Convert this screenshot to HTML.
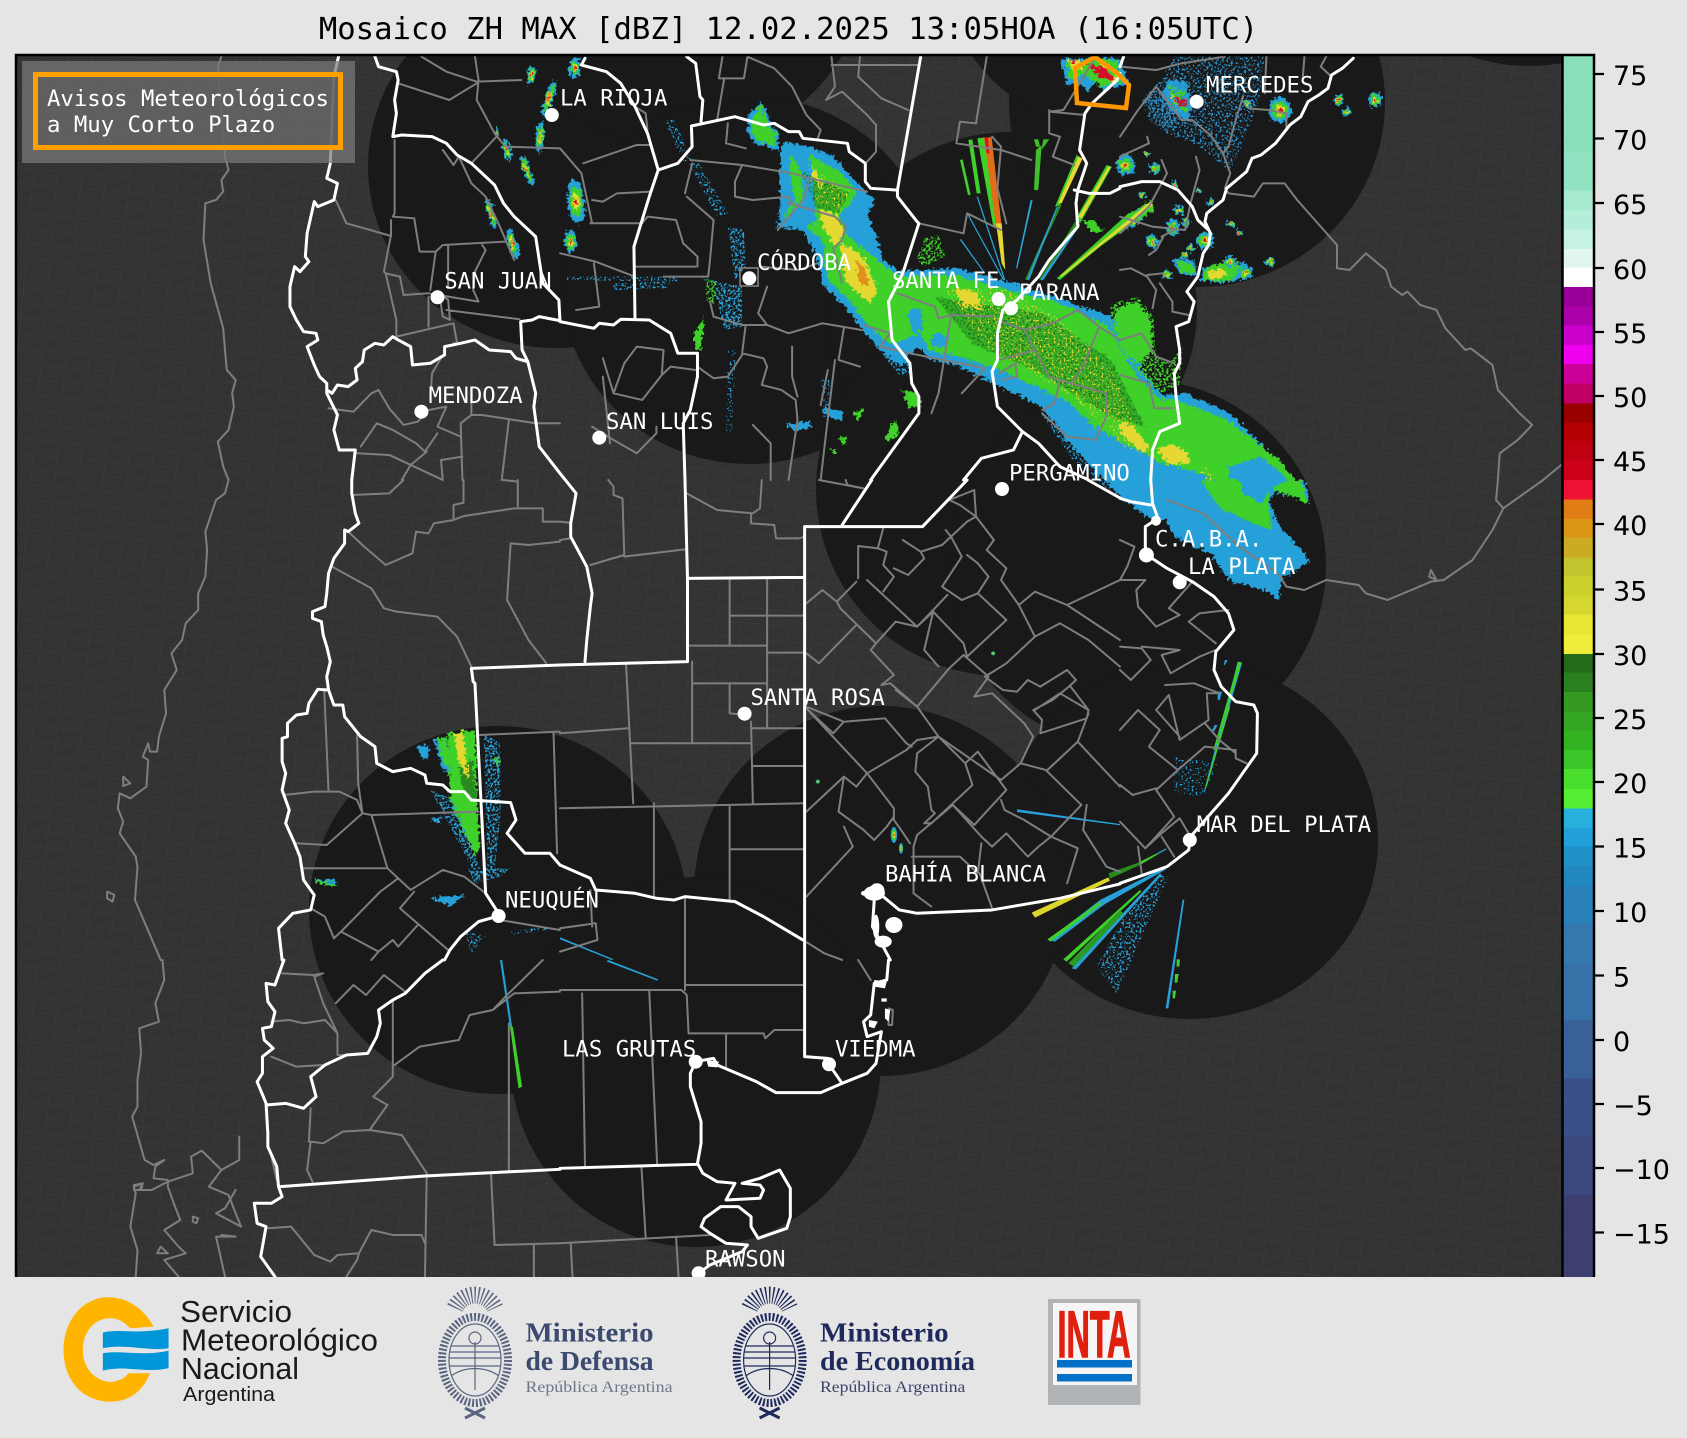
<!DOCTYPE html>
<html lang="es"><head><meta charset="utf-8"><title>Mosaico ZH MAX</title>
<style>
html,body{margin:0;padding:0;background:#e5e5e5}
svg{display:block}
.w,.g{fill:none;stroke-linejoin:round;stroke-linecap:round;vector-effect:non-scaling-stroke}
.w{stroke:#fff;stroke-width:3}
.g{stroke:#7e7e7e;stroke-width:2}
.l{font-family:"DejaVu Sans Mono","Liberation Mono",monospace;font-size:22.3px;fill:#fff}
.t{font-family:"DejaVu Sans",sans-serif;font-size:27px;fill:#000}
.b{fill:#28a0d8}.n{fill:#3fd02a}.d{fill:#2a8a20}.y{fill:#e6d832}.o{fill:#e0901a}.r{fill:#d8102a}.m{fill:#e000b0}
</style></head><body>
<svg xmlns="http://www.w3.org/2000/svg" width="1687" height="1438" viewBox="0 0 1687 1438">
<defs>
<clipPath id="pc"><rect x="16" y="55" width="1547" height="1222"/></clipPath>
<pattern id="p" width="24" height="15" patternUnits="userSpaceOnUse" patternTransform="rotate(5)"><path d="M0 .5H24M.5 0V15" stroke="#444" stroke-width="1" stroke-dasharray="1 2" fill="none"/></pattern>
<filter id="rough" filterUnits="userSpaceOnUse" x="0" y="0" width="1687" height="1438"><feTurbulence type="fractalNoise" baseFrequency=".28" numOctaves="2" seed="4"/><feDisplacementMap in="SourceGraphic" scale="9" xChannelSelector="R" yChannelSelector="G"/></filter>
<filter id="speck" filterUnits="userSpaceOnUse" x="0" y="0" width="1687" height="1438"><feTurbulence type="fractalNoise" baseFrequency=".42" numOctaves="2" seed="9"/><feColorMatrix values="0 0 0 0 0 0 0 0 0 0 0 0 0 0 0 9 0 0 0 -4.4"/><feComposite in="SourceGraphic" operator="in"/></filter>
<filter id="mid" filterUnits="userSpaceOnUse" x="0" y="0" width="1687" height="1438"><feTurbulence type="fractalNoise" baseFrequency=".45" numOctaves="2" seed="21"/><feColorMatrix values="0 0 0 0 0 0 0 0 0 0 0 0 0 0 0 14 0 0 0 -7.7"/><feComposite in="SourceGraphic" operator="in"/></filter>
<filter id="sparse" filterUnits="userSpaceOnUse" x="0" y="0" width="1687" height="1438"><feTurbulence type="fractalNoise" baseFrequency=".5" numOctaves="2" seed="33"/><feColorMatrix values="0 0 0 0 0 0 0 0 0 0 0 0 0 0 0 14 0 0 0 -8.4"/><feComposite in="SourceGraphic" operator="in"/></filter>
<g id="c"><ellipse class="b" rx="20" ry="20"/><ellipse class="n" rx="14" ry="14"/><ellipse class="y" rx="8" ry="8"/><ellipse class="r" rx="3.500" ry="3.500"/></g>
<g id="arms" fill="none" stroke="currentColor"><ellipse rx="33" ry="43" stroke-width="8" stroke-dasharray="2 1.800"/><ellipse rx="26" ry="36" stroke-width="1.200"/><path stroke-width="1.200" d="M-24 -14H24M-25 -8H25M-26 -2H26M-25 6H25M0 -18V30M-24 16C-10 6 10 6 24 16"/><circle cy="-22" r="6" stroke-width="1.200"/><path stroke-width="17" stroke-dasharray="1.300 2.200" d="M-20 -52A22 22 0 0 1 20 -52"/><path stroke-width="3" d="M-10 58 10 48M10 58-10 48"/></g>
</defs>

<rect width="1687" height="1438" fill="#e5e5e5"/>
<g clip-path="url(#pc)">
<rect x="16" y="55" width="1547" height="1222" fill="#333"/>
<rect x="16" y="55" width="1547" height="1222" fill="url(#p)"/>
<g fill="#191919">
<ellipse cx="556" cy="166" rx="188" ry="182"/>
<ellipse cx="680" cy="-40" rx="188" ry="188"/>
<ellipse cx="749" cy="280" rx="188" ry="184"/>
<ellipse cx="1011" cy="310" rx="186" ry="178"/>
<ellipse cx="1197" cy="102" rx="188" ry="185"/>
<ellipse cx="1120" cy="-50" rx="182" ry="182"/>
<ellipse cx="1529" cy="-118" rx="184" ry="184"/>
<ellipse cx="1002" cy="489" rx="186" ry="187"/>
<ellipse cx="1137" cy="565" rx="189" ry="186"/>
<ellipse cx="1190" cy="840" rx="188" ry="179"/>
<ellipse cx="881" cy="891" rx="187" ry="185"/>
<ellipse cx="498" cy="910" rx="189" ry="184"/>
<ellipse cx="695.700" cy="1062" rx="185" ry="185"/>
</g>

<!-- precipitación: capas -->
<g filter="url(#rough)">
 <g transform="translate(780 100) scale(.3444 .3333)">
  <path class="b" d="M10 125 70 135 150 165 215 240 275 300 255 345 275 400 300 480 345 515 510 505 660 545 800 590 960 650 1000 690 1060 825 1110 885 1175 880 1300 935 1420 1055 1530 1190 1450 1150 1420 1200 1440 1260 1080 1260 1000 1200 930 1130 840 1030 760 920 640 860 600 840 520 800 430 775 400 740 350 800 290 750 240 690 190 620 130 560 105 470 60 370 0 365 0 150Z"/>
  <path class="n" d="M30 165 100 170 180 220 225 280 175 345 195 405 265 465 320 510 350 530 500 525 680 575 800 605 950 675 1040 835 1100 895 1150 900 1300 960 1450 1080 1535 1195 1450 1150 1400 1070 1300 1100 1330 1190 1280 1150 1200 1110 1100 1090 1060 1060 1000 1030 920 985 830 900 720 850 640 810 520 770 430 750 410 700 370 715 320 735 260 680 200 600 140 540 125 470 130 430 60 365 10 350 45 300 30 240Z"/>
  <path class="n" d="M975 625 1040 605 1075 660 1080 750 1050 790 1000 760 975 700Z"/>
  <path class="b" d="M372 628 410 628 415 690 382 700ZM440 700 490 705 478 745 440 738ZM1310 1105 1400 1075 1490 1150 1425 1170 1420 1260 1100 1260 1090 1180 1200 1170 1300 1170Z"/>
  <path class="d" opacity=".5" d="M450 590 760 640 960 780 1060 980 960 950 760 820 560 730ZM70 215 200 280 170 340 90 320Z"/>
  <path class="y" d="M175 425 240 470 285 570 262 610 190 545ZM110 325 165 345 190 400 160 440 125 380ZM65 180 105 215 130 270 95 235Z"/>
  <path class="o" d="M220 480 245 500 262 565 230 545Z"/>
  <path class="y" d="M1095 1050 1135 1030 1185 1060 1190 1090 1130 1095ZM985 960 1030 985 1075 1045 1050 1055 990 1000ZM505 565 570 575 590 630 530 620Z"/>
  <path class="b" d="M125 925 185 935 180 960 130 950ZM25 970 90 965 80 990 35 985ZM1075 415 1095 420 1085 445Z"/>
  <path class="n" d="M355 870 395 880 410 920 375 925ZM300 1020 335 960 345 1000 320 1025ZM210 935 245 930 225 965ZM145 1050 165 1045 160 1065ZM165 1015 195 1015 185 1035Z"/>
 </g>
 <g transform="translate(560 0) scale(.3571 .3333)">
  <path class="b" d="M600 685 680 610 680 520 630 430 700 470 720 660 680 690 620 680Z"/>
  <path class="n" d="M375 1000 405 950 395 1050 378 1050Z"/>
  <path class="b" d="M530 340 565 305 595 380 615 400 610 450 545 430 525 395Z"/>
  <path class="n" d="M540 345 565 315 585 380 605 400 600 440 550 420 535 390Z"/>
  <path class="b" d="M740 1220 790 1235 780 1255 745 1240ZM640 1275 700 1265 695 1290 645 1290Z"/>
 </g>
 <g transform="translate(960 50) scale(.3333)">
  <path class="b" d="M305 25 480 25 505 100 430 125 410 90 385 125 360 100 320 105Z"/>
  <path class="n" d="M315 30 470 30 485 95 425 110 370 70 330 90Z"/>
  <path class="y" d="M320 30 360 30 370 60 335 55ZM440 90 470 80 470 100ZM420 35 445 50 430 70Z"/>
  <path class="r" d="M378 40 440 55 462 90 420 85ZM330 30 350 30 345 45Z"/>
  <path class="b" d="M625 90 680 95 695 160 685 210 630 185 605 130Z"/>
  <path class="n" d="M622 105 672 125 685 190 640 165Z"/>
  <path class="y" d="M625 125 660 150 655 175Z"/>
  <path class="r" d="M640 140 680 150 675 170 650 165Z"/>
  <path class="b" d="M635 625 705 630 710 680 660 672Z"/><path class="n" d="M645 630 700 645 705 670 660 665ZM500 500 570 450 585 480 520 520ZM365 510 400 510 430 545 400 550Z"/>
  <path class="b" d="M730 650 860 640 880 680 780 700 720 690Z"/>
  <path class="n" d="M735 655 810 630 860 655 800 695 730 690Z"/>
  <path class="y" d="M745 665 790 655 800 680 750 690ZM800 630 830 630 825 645Z"/>
 </g>
 <g transform="translate(1120 0) scale(.3616 .3333)">
  <use href="#c" transform="translate(443 330) scale(1.6 1.9)"/>
  <use href="#c" transform="translate(605 300) scale(.8)"/><use href="#c" transform="translate(625 335) scale(.7)"/>
  <use href="#c" transform="translate(705 300) scale(.9 1.1)"/><use href="#c" transform="translate(352 312) scale(.6)"/>
  <use href="#c" transform="translate(15 495) scale(1.3 1.5)"/><use href="#c" transform="translate(95 505) scale(.8)"/>
  <use href="#c" transform="translate(73 462) scale(.5 .4)"/><use href="#c" transform="translate(150 555) scale(.5)"/>
  <use href="#c" transform="translate(250 607) scale(.55)"/><use href="#c" transform="translate(218 575) scale(.4)"/>
  <use href="#c" transform="translate(305 672) scale(.5)"/><use href="#c" transform="translate(330 700) scale(.5)"/>
  <use href="#c" transform="translate(162 630) scale(.7)"/><use href="#c" transform="translate(146 682) scale(.9 1.3)"/>
  <use href="#c" transform="translate(183 668) scale(.6)"/><use href="#c" transform="translate(88 725) scale(.8 1)"/>
  <use href="#c" transform="translate(195 745) scale(.55)"/><use href="#c" transform="translate(235 722) scale(1.2)"/>
  <use href="#c" transform="translate(178 765) scale(.55)"/><use href="#c" transform="translate(130 825) scale(.7)"/>
  <use href="#c" transform="translate(305 785) scale(.8)"/><use href="#c" transform="translate(345 818) scale(1)"/>
  <use href="#c" transform="translate(415 785) scale(.7)"/><use href="#c" transform="translate(62 585) scale(.5)"/>
  <use href="#c" transform="translate(45 655) rotate(40) scale(.7 1.9)"/>
 </g>
 <g transform="translate(0 0) scale(.3571 .3333)">
  <use href="#c" transform="translate(1487 225) rotate(15) scale(.6 1.4)"/>
  <use href="#c" transform="translate(1537 295) rotate(18) scale(.6 2.8)"/>
  <use href="#c" transform="translate(1513 410) rotate(5) scale(.6 2.4)"/>
  <use href="#c" transform="translate(1420 450) rotate(-12) scale(.5 1.7)"/>
  <use href="#c" transform="translate(1475 510) rotate(-18) scale(.55 2.4)"/>
  <use href="#c" transform="translate(1375 640) rotate(-15) scale(.5 2.4)"/>
  <use href="#c" transform="translate(1435 730) rotate(-15) scale(.65 2.4)"/>
  <use href="#c" transform="translate(1392 395) scale(.25 .7)"/>
 </g>
 <g transform="translate(560 0) scale(.3571 .3333)">
  <use href="#c" transform="translate(42 205) scale(.8 1.5)"/>
  <use href="#c" transform="translate(45 605) rotate(-6) scale(1.2 3.3)"/>
  <use href="#c" transform="translate(30 725) scale(.9 1.6)"/>
 </g>
 <g transform="translate(1120 480) scale(.3616 .3333)">
  <path class="b" d="M0 0 510 0 525 70 420 30 410 90 450 150 510 220 525 245 445 300 440 362 400 330 300 300 250 220 150 170 100 70 0 40Z"/>
  <path class="n" d="M225 0 500 0 522 70 415 25 410 80 420 150 370 130 270 80Z"/>
  <path class="b" d="M330 0 470 0 420 25 390 70 340 40Z"/>
 </g>
 <g transform="translate(0 480) scale(.3571 .3333)">
  <path class="b" d="M1170 800 1200 795 1200 835 1180 835ZM1205 1020 1240 1010 1225 1030ZM885 1195 945 1205 940 1220 890 1210ZM1205 1255 1300 1245 1265 1280Z"/>
  <path class="b" d="M1215 780 1250 770 1270 880 1240 870Z"/>
  <path class="n" d="M1222 775 1250 770 1262 860 1243 850Z"/>
  <path class="n" d="M1255 760 1332 750 1335 960 1345 1100 1330 1130 1260 960Z"/>
  <path class="d" d="M1285 860 1325 840 1332 960 1300 940Z"/>
  <path class="y" d="M1270 760 1296 757 1312 900 1290 860Z"/>
  <path class="n" d="M888 1200 948 1215 940 1222 885 1208ZM1380 840 1400 820 1395 860Z"/>
 </g>
</g>

<!-- moteado denso -->
<g filter="url(#speck)">
 <g transform="translate(780 100) scale(.3444 .3333)">
  <path class="n" d="M395 480 420 415 460 405 480 470 420 500Z"/>
  <path class="n" d="M960 610 1040 590 1085 650 1090 760 1130 790 1170 740 1160 860 1100 880 1040 820 1000 770 960 700Z"/>
 </g>
 <g transform="translate(560 0) scale(.3571 .3333)">
  <path class="b" d="M470 680 515 690 520 800 490 840ZM400 835 510 860 510 980 460 990 440 900Z"/>
  <path class="n" d="M405 835 440 850 430 920 410 900Z"/>
  <path class="b" d="M900 1060 960 1060 990 1120 950 1125Z"/>
 </g>
 <g transform="translate(0 480) scale(.3571 .3333)">
  <path class="b" d="M1205 930 1270 960 1345 1170 1360 1190 1330 1180ZM1355 760 1400 790 1402 1000 1385 1170 1365 1170 1360 950Z"/>
  <path class="b" d="M1310 1165 1430 1165 1400 1190 1330 1210Z"/>
 </g>
 <g transform="translate(1120 0) scale(.3616 .3333)"><path fill="#2a8cc4" d="M62 300 120 270 160 370 125 395Z"/></g>
</g>
<!-- moteado medio -->
<g filter="url(#mid)">
 <g transform="translate(1120 0) scale(.3616 .3333)">
  <path fill="#2a8cc4" d="M60 300 110 240 150 170 400 170 385 300 345 420 305 510 220 440 170 370 130 400 80 360Z"/>
  <path fill="#2a8cc4" d="M60 300 170 240 300 380 300 510 220 440 130 400Z"/>
 </g>
 <g transform="translate(560 0) scale(.3571 .3333)">
  <path class="b" d="M360 490 390 490 470 640 440 650ZM20 830 330 830 330 845 20 840ZM150 850 310 845 300 865 150 870ZM615 610 680 600 720 660 650 690 600 685Z"/>
  <path class="b" d="M290 360 320 360 370 480 345 485Z"/>
 </g>
 <g transform="translate(780 100) scale(.3444 .3333)">
  <path class="b" d="M760 945 830 915 960 1120 1000 1200 940 1160 850 1080Z"/>
  <path fill="#1f7a1a" d="M450 590 760 640 960 780 1060 980 960 950 760 820 560 730ZM60 210 200 280 170 340 100 320Z"/>
 </g>
 <g transform="translate(1000 830) scale(.3333)">
  <path class="b" d="M290 410 350 490 430 310 505 140 480 130 380 240Z"/>
 </g>
 <g transform="translate(0 480) scale(.3571 .3333)"><path class="b" d="M1300 1350 1360 1370 1320 1420ZM1430 1355 1530 1340 1530 1350 1430 1365Z"/></g>
</g>
<!-- moteado escaso -->
<g filter="url(#sparse)">
 <g transform="translate(780 100) scale(.3444 .3333)">
  <path class="y" d="M480 570 640 560 800 650 960 800 1040 1000 1100 1080 1000 1040 860 900 700 800 600 740ZM120 220 200 270 180 340 100 300Z"/>
  <path class="y" d="M640 620 780 680 860 800 800 840 680 770Z"/>
  <path class="y" d="M1230 1095 1260 1130 1250 1155 1220 1120Z"/>
 </g>
 <g transform="translate(560 0) scale(.3571 .3333)">
  <path class="b" d="M470 1050 492 1050 482 1300 465 1300ZM730 1130 762 1140 752 1230 730 1220Z"/>
 </g>
 <g transform="translate(1120 480) scale(.3616 .3333)">
  <path class="b" d="M150 830 270 850 230 950 150 940Z"/>
 </g>
</g>

<!-- ecos radiales -->
<g fill="none" stroke-linecap="butt">
 <g transform="translate(960 50) scale(.3333)">
  <path fill="#2aa8dc" d="M20 490 24 490 133 690 129 690ZM0 570 3 567 73 665 69 665ZM212 450 218 450 172 655 168 655ZM50 440 54 440 136 690 132 690Z"/>
  <path fill="#3fd02a" d="M25 270 37 268 62 430 50 430ZM0 330 8 328 32 435 24 435ZM52 265 75 262 120 530 100 530Z"/>
  <path fill="#e06d18" d="M72 262 95 262 125 530 108 530Z"/>
  <path fill="#e01028" d="M73 262 84 262 88 310 80 310Z"/>
  <path fill="#e6d832" d="M108 520 125 520 136 660 125 640Z"/>
  <path fill="#3fc02a" d="M228 300 245 285 235 420 222 420ZM222 268 235 268 240 290 228 290ZM250 268 268 268 245 300Z"/>
  <path fill="#3fd02a" d="M350 315 365 325 300 465 285 470ZM440 345 456 350 360 520 345 510Z"/>
  <path fill="#e6d832" d="M355 320 368 325 305 460 295 460ZM445 350 452 352 365 505 355 500Z"/>
  <path fill="#2a8a20" d="M295 465 305 465 200 690 195 688ZM345 515 360 515 245 690 238 688Z"/>
  <path fill="#3fd02a" d="M505 490 585 470 420 590 300 690 290 685Z"/>
  <path fill="#e6d832" d="M510 505 570 455 580 465 430 580 305 680 300 678Z"/>
  <path fill="#28a0d8" d="M200 690 290 470 293 472 208 690ZM240 690 360 520 360 526 250 690Z"/>
 </g>
 <g transform="translate(1000 830) scale(.3333)">
  <path fill="#dcd62a" d="M325 142 95 248 105 263 330 152Z"/>
  <path fill="#2a8a20" d="M325 130 415 98 420 105 330 146Z"/>
  <path fill="#3fd02a" d="M415 98 470 70 472 74 420 105Z"/>
  <path fill="#28a0d8" d="M470 70 498 55 500 58 472 74ZM300 210 495 112 498 118 310 225ZM215 415 480 130 485 135 228 418ZM548 208 553 210 505 535 497 535Z"/>
  <path fill="#28a0d8" d="M145 330 300 210 315 222 165 335Z"/>
  <path fill="#3fd02a" d="M142 328 300 215 305 222 152 335ZM190 388 420 180 424 185 200 395Z"/>
  <path fill="#2a9a24" d="M205 400 360 240 370 250 222 410Z"/>
  <path fill="#3fd02a" d="M530 388 540 388 538 410 530 410ZM525 432 536 432 532 458 524 458ZM518 482 528 482 525 505 518 505Z"/>
 </g>
 <g transform="translate(1120 480) scale(.3616 .3333)">
  <path fill="#28a0d8" d="M325 545 338 548 250 880 235 935 232 935 262 810 300 660 ZM290 540 298 540 290 555 287 555ZM270 635 282 635 276 660 270 660ZM262 735 270 735 260 755 255 750Z"/>
  <path fill="#3fd02a" d="M327 545 336 548 262 810 258 810ZM300 680 305 680 240 920 236 920Z"/>
 </g>
 <g transform="translate(560 480) scale(.3571 .3333)">
  <path fill="#28a0d8" d="M1280 988 1568 1032 1568 1036 1280 996Z"/>
  <path fill="#28a0d8" d="M0 1372 150 1438 145 1440 0 1378Z"/>
  <use href="#c" transform="translate(722 905) scale(.3)"/>
  <use href="#c" transform="translate(1213 520) scale(.3)"/>
  <use href="#c" transform="translate(935 1065) scale(.45 1.2)"/>
  <use href="#c" transform="translate(955 1105) scale(.3 .8)"/>
 </g>
 <g transform="translate(560 960) scale(.3571 .3333)"><path fill="#28a0d8" d="M135 0 275 58 272 62 130 4Z"/></g>
 <g transform="translate(0 960) scale(.3571 .3333)">
  <path fill="#28a0d8" d="M1400 0 1406 0 1434 200 1428 200Z"/>
  <path fill="#3fd02a" d="M1428 200 1436 200 1462 380 1452 385Z"/>
 </g>
</g>

<!-- limites grises -->
<g transform="translate(0 0) scale(.3571 .3333)"><path class="g" d="M620 170 610 200 630 470 640 510 620 540 625 575 605 600 575 610 570 720 590 850 625 985 630 1050 635 1110 660 1140 650 1180 655 1220 640 1290 610 1325 625 1400 640 1440M1180 170 1250 215 1335 245 1460 240M1115 250 1258 300 1335 250M1330 170 1340 240 1335 300 1385 400 1415 440 1568 445M1395 405 1320 490M1240 450 1270 495 1285 470 1320 550 1360 590 1400 680 1440 780M1105 420 1105 640 1100 650 1160 655 1175 755 1220 755 1240 735 1415 725M1095 660 1095 705 1075 815 1080 820 1120 830 1130 885 1200 880 1340 905 1325 870 1330 815 1360 750 1350 735M1255 735 1255 865M1220 755 1205 870M940 600 970 670 1020 685 1095 708M1080 820 1110 960 1110 1010 1270 970 1280 1030 1270 1030M1200 890 1200 980M1230 880 1240 950 1260 960 1255 900ZM1250 930 1455 958M1240 1065 1210 1120 1205 1190M920 1225 990 1235 1040 1180 1060 1170 1090 1225 1130 1275 1170 1265 1200 1230 1250 1220 1225 1280 1290 1310M1010 1340 1055 1270 1100 1290 1165 1330 1190 1355 1225 1300M1000 1360 1090 1365 1150 1395 1240 1440M1150 1395 1195 1355M1290 1270 1320 1245 1350 1245 1500 1270 1568 1270M1290 1270 1295 1440M1425 1260 1405 1440M1235 1380 1295 1370M1235 1380 1240 1440M1320 1200 1320 1245M1150 1395 1125 1440"/></g>
<g transform="translate(560 0) scale(.3571 .3333)"><path class="g" d="M455 170 445 235 515 235 525 170M460 235 440 360M470 370 465 430 520 445M365 480 510 495 650 520 700 535 860 575M210 320 240 340 245 390M65 490 215 435 250 435M90 600 120 605 160 580 255 575M85 670 230 670 245 650 325 660 345 730 385 770 385 800M0 760 100 785 210 830M95 790 110 920 45 930M0 445 60 520 90 670M210 800 380 800M355 590 430 660 420 780 415 830 380 830 290 830M510 495 490 545 490 590 540 600 640 590 650 610M350 580 370 490M420 905 430 950 510 975 580 975 640 1000 735 970 845 990M520 975 510 1060 570 1075 580 1100 565 1155 620 1170 660 1200 665 1260 640 1440M650 1040 650 1130 665 1190M590 1440 590 1330 540 1275M385 1100 430 1135 470 1130 510 1065M120 1075 150 1180 230 1200 285 1125 290 1050 215 1040 180 1090 150 1180M120 1130 140 1330M90 1280 150 1320 215 1360 270 1300 270 1280M380 1110 310 1100 285 1125M730 1440 745 1300 770 1080M795 985 780 1080 840 1100M750 1110 730 1215M560 800 670 810 720 790M580 860 555 940 580 975M700 535 680 600 610 690M640 610 770 650 800 680 790 720 765 745 790 850M945 880 1050 920 1060 955 1095 945 1210 950M850 975 925 1000 895 1040 980 1060 1190 1105M1095 950 1060 1180 1040 1240M1125 1180 1190 1105M1005 670 1130 700 1140 640 1235 690M1120 365 1110 430 1235 450 1320 480M1210 410 1235 440 1225 565 1250 670M1225 960 1300 990 1380 970 1450 930 1510 980 1568 1020M1230 1080 1330 1050 1370 1130 1400 1140 1430 1150 1530 1180 1530 1250 1500 1320 1420 1310 1350 1240M1300 990 1330 1050M1510 980 1465 1100 1430 1150M1400 1140 1385 1210 1350 1230M1230 1120 1275 1090 1280 1130 1240 1140M1370 330 1370 400 1400 410 1380 470 1440 495M525 170 600 205 650 260 690 345 730 390 720 420M760 170 770 260 745 300 790 275 860 345 885 375 885 455 860 485M760 195 1005 195M840 170 835 230 900 295 975 330M1195 170 1165 370 1120 365M1500 170 1410 330 1370 335 1470 345"/></g>
<g transform="translate(0 480) scale(.3571 .3333)"><path class="g" d="M640 0 630 40 605 60 575 155 580 210 575 290 555 340 555 390 520 430 510 480 480 520 495 570 460 630 465 700 445 770 440 815 420 815 415 790 400 830 415 840 410 920 365 955 335 940 330 985 345 1025 335 1060 380 1130 385 1160 378 1260 410 1340 450 1440M985 45 1090 40 1130 0M975 155 1020 200 1080 255 1155 220 1165 155 1200 160 1215 130 1270 120 1300 108 1440 85 1520 85 1520 125 1568 125M1270 120 1270 75 1298 68 1298 0M1430 190 1480 195 1568 185M1430 190 1420 360 1480 480 1530 550M1450 0 1450 80M1410 0 1450 5M930 260 1040 325 1075 385 1110 395 1225 410 1280 470 1320 560M908 630 920 935M1000 765 1003 910 1015 1000 1040 1005 1340 995M795 945 880 935 950 935 1000 960 1015 1000 915 1095 830 1090M1040 1005 1085 1165 1115 1195 1150 1230 1240 1170 1300 1190 1360 1240M850 1165 1080 1165M1115 1195 1065 1235 955 1355 935 1375 910 1310 870 1285M1160 1235 1120 1285 1255 1410M955 1355 1060 1415 1100 1380 1115 1400 1170 1335M1340 765 1568 755M1550 755 1560 1120M1400 1320 1568 1350M1060 1415 1040 1440M300 1235 320 1245 315 1265 300 1255ZM345 890 365 910 345 918Z"/></g>
<g transform="translate(560 480) scale(.3571 .3333)"><path class="g" d="M905 145 890 205 835 198 835 295M890 205 915 215 905 255 935 290 905 335M860 300 1000 440M830 305 775 365 785 385 885 490M690 370 735 330 775 365M960 180 1010 215 1070 195 1095 170 1140 125 1165 110 1215 180 1195 210M1010 215 1020 235 975 285 935 265M1080 150 1095 170 1125 230 1070 320 1125 360 1170 340 1200 290 1170 250 1140 225M1165 110 1160 30 1090 60 1120 75 1165 110M1195 210 1250 265 1235 300 1285 375 1330 335 1420 375 1568 300M1170 340 1250 420 1140 530 1130 490 1045 395 1000 440 1085 345M1000 440 940 425 885 490 870 510 935 585 900 615 925 610 1000 680 1090 565 1130 525 1200 590 1160 650 1210 640 1300 730 1325 770 1290 850 1235 900 1060 770 1000 680 940 630M830 435 725 550 690 520M690 680 795 725 765 760 690 685 860 880 935 985 935 1020 955 1050 980 1090M1045 395 1020 510 1060 560M1190 590 1240 630 1280 635 1310 600 1345 620 1420 570 1445 600 1425 620 1380 660 1325 690 1350 720 1345 760 1475 715 1480 690 1430 620M1060 770 1000 820 995 875 1030 920 1040 990 1050 1000 1020 1030 1040 1030 1155 915 1135 850 1060 770M1135 850 1170 815 1250 930 1160 1035 1100 975 1000 1065 990 1100 990 1240 1040 1280M1100 975 1180 1070 1210 1100 1250 1060 1310 1130 1340 1100 1375 1070 1450 1105 1420 1210M1235 960 1245 990 1300 1020 1375 1070 1460 975 1360 870 1290 850M860 880 830 920 795 890 780 995 850 1050 880 1080 915 1040 935 1010M690 995 795 890M690 1250 820 1100 795 1040M985 800 970 790 910 715 800 725M860 880 970 810 1000 780 1060 770M1475 975 1465 1050 1530 1160 1568 1175M1450 785 1568 920M1365 870 1450 785 1480 700M1180 1090 1170 1180 1120 1130 985 1130M1175 1180 1210 1285M1330 690 1400 640 1480 690M1330 470 1400 430 1480 480 1568 560M1285 375 1330 470 1250 550 1190 590M1420 375 1568 480M475 297 475 495M580 297 580 745M357 497 580 497M475 407 685 407M580 518 685 518M370 545 370 790M370 610 580 610M475 610 475 700 500 703M535 725 540 970M540 745 685 745M540 858 685 858M198 790 535 790M185 555 205 970M0 760 190 745M0 985 685 970M263 970 263 1255M475 975 475 1260M475 1108 685 1108M350 1250 350 1440M355 40 440 90 540 100 560 85 565 0M535 100 535 130 600 135 605 175 670 175 685 170M725 0 850 25M800 0 805 15 850 25M135 0 150 20 150 45 175 55 180 225 85 255M180 230 350 208M0 125 25 128M0 180 30 175M680 1380 740 1420 790 1440M0 1345 100 1330 105 1380 0 1415M85 1230 90 1340"/></g>
<g transform="translate(0 960) scale(.3571 .3333)"><path class="g" d="M455 0 460 60 435 130 445 185 390 205 395 280 385 360 385 440 370 470 405 600 430 615 460 600 435 620 430 655 470 660 470 680 490 740 505 780 460 810 500 860 520 880 460 900 500 950M380 950 385 870 365 800 380 700 375 680 400 670 390 690 425 690 470 665 540 640 535 590 565 572 620 630 670 600 670 530M620 630 585 680 640 705 660 760 675 800 605 760 630 745 660 690M620 825 660 830 605 830 630 950M790 40 880 45 905 40 880 50 905 130 945 220 945 285 975 285M760 185 810 180 850 190 910 180 945 220M760 290 830 320 905 315M940 130 990 75 1025 105 1075 45 1135 95M1100 120 1100 315 1100 350 1045 410 1085 435 1035 510 960 515 905 550 870 545 860 630 875 665M870 445 865 545M1035 510 1125 525 1195 640 1190 950M1105 315 1175 260 1285 240 1315 165 1380 150 1440 100 1568 95M1380 150 1420 105 1520 0M1425 190 1425 630M1375 640 1385 855 1568 850M1495 855 1495 950M750 805 815 800 880 885 925 905 945 885 1005 880 1000 900 970 950M1005 880 1040 810 1100 825 1180 825 1190 850M760 590 775 660M540 770 555 775 550 790 540 785ZM450 860 470 880 440 880ZM375 675 400 670 395 690 375 690Z"/></g>
<g transform="translate(560 960) scale(.3571 .3333)"><path class="g" d="M0 90 340 90 355 105 360 220 570 220 575 235 600 210 680 210M350 75 680 75M350 0 350 90M62 100 70 620M250 95 272 612M465 225 465 320M228 620 240 835M0 850 420 825M30 850 35 950M325 830 332 950M835 0 870 60M920 145 932 150 930 195 920 195Z"/></g>
<g transform="translate(1120 0) scale(.3616 .3333)"><path class="g" d="M290 565 300 580 370 590 395 550 455 550 490 600 600 735 600 805 635 810 680 760 735 810 750 860 780 885 795 875 830 915 875 930 900 985 955 1050 970 1045 1030 1095 1045 1170 1105 1240 1140 1275 1100 1320 1050 1360 1045 1440M1226 1390 1170 1440M405 170 400 280M510 170 505 240M570 170 555 200 580 225M355 325 410 330 460 340 460 390M0 200 100 210 170 190 290 170M100 260 50 330 0 410M200 360 250 405 285 460 305 520M340 290 320 360 300 440 285 460M75 410 80 430 0 470M210 470 220 510 195 610M115 480 130 520 80 620 0 700M0 650 90 680 180 690 195 610M0 810 30 805 75 830 100 870 90 925M110 850 145 905 145 935 190 945M75 825 120 820M0 1020 60 1000 100 1070 150 1090M0 1125 80 1150 95 1225 145 1225M115 710 150 690M80 765 100 750 120 710M305 520 290 565M100 260 170 360 200 360"/></g>
<g transform="translate(1120 480) scale(.3616 .3333)"><path class="g" d="M1060 85 1030 150 975 240 895 300 860 305 740 360 680 340 660 315 570 300 510 330 460 320 440 285 330 200 230 100 130 60M1045 0 1040 60 1060 85M1060 85 1170 0M860 270 875 300 855 290ZM200 305 135 385 165 405 100 440 50 380 45 330 70 300M265 510 220 530 140 580 115 525 165 510 60 500M0 500 60 505 85 540 30 600 0 570M300 390 220 400 190 425 265 490M125 615 205 610 275 640 240 640 245 720 165 780 135 645 100 690 165 770M50 690 0 750M50 690 110 750 80 800 160 870 100 930 150 1010 70 1105 0 1025M160 870 235 800 320 810 320 835 350 850M235 730 275 780 320 820M100 925 35 945 0 915M70 1105 115 1060 165 1015 195 1070M115 1070 150 1130M50 1100 60 1180M0 180 40 200 20 260 0 300M0 300 70 300"/></g>

<!-- limites blancos -->
<path class="w" d="M1088 480 1120 498"/>
<g transform="translate(0 0) scale(.3571 .3333)"><path class="w" d="M948 170 935 230 930 350 925 490 915 535 945 550 935 600 890 620 880 605 860 700 855 770 865 785 840 815 825 800 812 860 812 920 830 960 850 995 885 1000 890 1020 860 1040 880 1095 895 1130 915 1150 915 1180 945 1245 935 1290 950 1350 995 1350 985 1440M915 1170 930 1180 945 1155 975 1160 1000 1140 995 1105 1015 1085 1020 1050 1050 1030 1075 1035 1100 1010 1115 1020 1150 1040 1155 1095 1205 1090 1245 1065 1245 1040 1290 1030 1330 1020 1370 1050 1430 1055 1445 1075 1478 1085 1500 1180 1495 1220 1510 1340 1568 1420M1050 170 1060 200 1110 215 1115 240 1105 300 1110 340 1100 410 1125 405 1210 410 1250 430 1280 465 1320 490 1385 555 1410 610 1440 650 1500 710 1510 780 1520 850 1565 900 1568 962M1568 962 1510 950 1490 960 1458 965 1462 1050 1478 1085"/></g>
<g transform="translate(560 0) scale(.3571 .3333)"><path class="w" d="M70 175 60 195 130 215 170 250 210 320 245 400 275 510 250 590 207 740 210 955M275 510 330 490 370 440 368 378 490 350 570 375 600 370 640 395 670 395 680 415 805 430 810 455 855 490 855 545 870 565 940 570M355 170 380 190 392 290 400 300 395 365M1010 170 945 570 945 590 1000 665 1005 670 960 820 920 905 930 1020 980 1090 985 1150 1005 1190 1005 1240 870 1440M0 965 95 985 110 970 150 975 170 958 250 960 310 1000 330 1060 385 1060 385 1130 365 1230 345 1270 350 1440M1470 340 1455 450 1475 490 1450 570 1445 610 1450 680 1370 780 1340 830 1280 900 1240 930 1225 1000 1225 1080 1210 1115 1225 1220 1295 1295 1340 1330 1400 1400 1480 1440M1295 1295 1270 1350 1180 1375 1130 1440M1440 570 1480 580 1540 580 1568 565M1470 340 1490 310 1560 240 1568 220"/></g>
<g transform="translate(1120 0) scale(.3616 .3333)"><path class="w" d="M645 175 615 205 585 225 575 265 550 285 520 305 500 350 470 375 430 430 390 465 365 475 350 515 295 565 285 600 240 640 235 665 250 700 245 735 230 760 215 830 185 875 205 905 190 965 155 980 165 1050 165 1090 150 1120 155 1190 165 1270 110 1295 90 1350 85 1440M0 560 60 545 110 545 160 570 200 620 215 660 245 690M10 170 0 200"/></g>
<g transform="translate(1120 480) scale(.3616 .3333)"><path class="w" d="M85 0 90 70 105 115 70 140 70 200 75 225 130 265 200 305 260 350 300 400 315 450 265 515 260 570 280 620 320 665 370 675 380 700 378 820 300 940 195 1070 190 1110 130 1160 0 1210M0 55 30 65 85 75"/></g>
<g transform="translate(560 480) scale(.3571 .3333)"><path class="w" d="M0 -20 45 40 30 130 30 170 75 260 90 340 85 380 75 480 70 545M873 0 790 135M1140 0 1015 140 690 140 685 140 685 1440M350 0 357 295 685 292M357 295 357 545 0 555M1568 1212 1400 1255 1210 1290 1000 1300 950 1290 905 1250 885 1230M880 1260 875 1340 905 1400 925 1440M0 1155 85 1195 100 1230 210 1240 270 1255 320 1260 350 1250 490 1265 570 1310 680 1380"/>
<g fill="#fff"><ellipse cx="880" cy="1240" rx="30" ry="22"/><ellipse cx="935" cy="1335" rx="24" ry="24"/><ellipse cx="905" cy="1385" rx="24" ry="18"/><ellipse cx="885" cy="1340" rx="9" ry="36"/><circle cx="850" cy="1240" r="7"/></g></g>
<g transform="translate(0 480) scale(.3571 .3333)"><path class="w" d="M985 0 985 40 995 100 1005 130 975 155 965 150 965 190 935 235 920 280 915 340 910 380 875 395 875 415 900 425 905 465 915 500 925 545 915 590 920 630 890 628 865 670 860 700 830 705 805 730 805 770 790 775 790 845 800 880 790 930 810 990 800 1030 825 1090 840 1130 850 1200 880 1245 870 1290 820 1300 780 1345 790 1440M920 630 935 675 960 675 965 710 1010 770 1050 800 1055 850 1100 875 1150 865 1190 885 1195 910 1240 915 1260 935 1300 935 1320 960 1430 968 1445 1020 1420 1060 1445 1090 1470 1120 1540 1120 1568 1155M1568 555 1320 565 1325 605 1330 610 1360 1240 1390 1290M1396 1308 1340 1325 1290 1370 1260 1410 1245 1440"/></g>
<g transform="translate(0 960) scale(.3571 .3333)"><path class="w" d="M795 0 785 30 770 75 745 70 750 125 770 155 760 200 735 205 740 240 765 265 735 290 735 340 720 365 745 430 750 520 750 560 775 620 780 680 790 710 760 730 712 730 720 790 745 800 735 860 730 890 770 950M745 435 800 430 850 445 885 410 870 350 910 315 970 285 1030 280 1055 230 1065 190 1060 150 1100 120 1135 100 1190 40 1240 0M785 680 1190 648 1568 628"/></g>
<g transform="translate(560 960) scale(.3571 .3333)"><path class="w" d="M685 0 685 290 750 295M753 313 790 370 730 398 605 398 550 365 440 315 430 295 380 305 365 340 365 380 395 485 395 550 385 610 400 640 440 665 490 670 465 720 560 715 570 690 560 675 510 670 560 655 615 630 645 685 645 770 635 805 555 835 535 800 535 770 500 740 450 740 405 775 395 800 420 820 465 850 525 855 510 875 420 915 388 940M0 625 385 613M920 0 915 60 880 70 870 165 850 185 860 230 900 215 885 310 860 340 790 370"/>
<path fill="#fff" d="M880 60 915 65 910 85 880 80ZM900 115 915 115 915 125 900 125ZM910 145 925 150 920 185 910 175ZM865 180 890 185 880 205 865 200ZM410 300 445 305 440 322 415 320Z"/></g>

<!-- ciudades -->
<g fill="#fff">
<circle cx="551.800" cy="115" r="7"/><circle cx="437.500" cy="297.300" r="7"/><circle cx="421.400" cy="411.700" r="7"/><circle cx="599.300" cy="437.700" r="7"/><circle cx="749.300" cy="278.300" r="7"/><circle cx="998.600" cy="299" r="7"/><circle cx="1011" cy="308.300" r="7"/><circle cx="1196.700" cy="101.700" r="7"/><circle cx="1002" cy="489" r="7"/><circle cx="1156" cy="520.700" r="5"/><circle cx="1146.400" cy="555" r="7.500"/><circle cx="1179.700" cy="582.300" r="7"/><circle cx="744.600" cy="713.700" r="7"/><circle cx="1189.800" cy="840" r="7"/><circle cx="877" cy="890.700" r="7.500"/><circle cx="498.600" cy="916" r="7"/><circle cx="695.700" cy="1061.700" r="7"/><circle cx="829" cy="1064.300" r="7"/><circle cx="698.600" cy="1273.300" r="7"/>
</g>
<polygon points="1075,68 1095,57 1117,73 1129,85 1126,108 1077,103" fill="none" stroke="#ff9800" stroke-width="4.500"/>
<rect x="740" y="268" width="18" height="18" fill="none" stroke="#7c7c7c" stroke-width="1.700"/>
<g class="l">
<text x="560" y="105.700">LA RIOJA</text>
<text x="444.200" y="288.700">SAN JUAN</text>
<text x="428.600" y="403">MENDOZA</text>
<text x="606" y="429">SAN LUIS</text>
<text x="757" y="270">CÓRDOBA</text>
<text x="892" y="288">SANTA FE</text>
<text x="1019" y="300">PARANA</text>
<text x="1206" y="92.700">MERCEDES</text>
<text x="1009" y="480.700">PERGAMINO</text>
<text x="1155" y="546.700">C.A.B.A.</text>
<text x="1188" y="574">LA PLATA</text>
<text x="750.500" y="705">SANTA ROSA</text>
<text x="1196.700" y="832">MAR DEL PLATA</text>
<text x="885" y="881.700">BAHÍA BLANCA</text>
<text x="505" y="907.700">NEUQUÉN</text>
<text x="562" y="1056.700">LAS GRUTAS</text>
<text x="835" y="1056.700">VIEDMA</text>
<text x="705" y="1266.700">RAWSON</text>
</g>
<rect x="22" y="61" width="333" height="102" fill="#7a7a7a" fill-opacity=".72"/>
<rect x="35.500" y="74.500" width="305" height="73" fill="#5e5e5e" fill-opacity=".75" stroke="#ffa000" stroke-width="5"/>
<text class="l" x="47" y="106">Avisos Meteorológicos</text>
<text class="l" x="47" y="132">a Muy Corto Plazo</text>
</g>

<!-- barra de color -->
<g shape-rendering="crispEdges">
<rect x="1563" y="55" width="31" height="97" fill="#88dfb9"/><rect x="1563" y="151.700" width="31" height="39.300" fill="#90e2c0"/><rect x="1563" y="190.700" width="31" height="19.600" fill="#a6ebcf"/><rect x="1563" y="210" width="31" height="19.600" fill="#b4eed8"/><rect x="1563" y="229.300" width="31" height="20" fill="#c5f2e2"/><rect x="1563" y="249" width="31" height="19" fill="#e0f6ee"/><rect x="1563" y="267.700" width="31" height="19.600" fill="#fff"/><rect x="1563" y="287" width="31" height="19.300" fill="#990099"/><rect x="1563" y="306" width="31" height="20" fill="#aa00aa"/><rect x="1563" y="325.700" width="31" height="19.600" fill="#cc00cc"/><rect x="1563" y="345" width="31" height="19.300" fill="#ee00ee"/><rect x="1563" y="364" width="31" height="19.600" fill="#cc0099"/><rect x="1563" y="383.300" width="31" height="20.300" fill="#c00066"/><rect x="1563" y="403.300" width="31" height="19.300" fill="#990000"/><rect x="1563" y="422.300" width="31" height="19" fill="#b30000"/><rect x="1563" y="441" width="31" height="19.300" fill="#bf0010"/><rect x="1563" y="460" width="31" height="20.300" fill="#cc0018"/><rect x="1563" y="480" width="31" height="19.600" fill="#ee1133"/><rect x="1563" y="499.300" width="31" height="20" fill="#e07d15"/><rect x="1563" y="519" width="31" height="19" fill="#d99715"/><rect x="1563" y="537.700" width="31" height="20.300" fill="#ccaa22"/><rect x="1563" y="557.700" width="31" height="19.300" fill="#c4c42e"/><rect x="1563" y="576.700" width="31" height="19.300" fill="#ccd02c"/><rect x="1563" y="595.700" width="31" height="19.300" fill="#d6d630"/><rect x="1563" y="614.700" width="31" height="20.600" fill="#e6e633"/><rect x="1563" y="635" width="31" height="19.300" fill="#eeee3a"/><rect x="1563" y="654" width="31" height="19" fill="#226b18"/><rect x="1563" y="672.700" width="31" height="19.600" fill="#2a8020"/><rect x="1563" y="692" width="31" height="20" fill="#339922"/><rect x="1563" y="711.700" width="31" height="19.300" fill="#33a622"/><rect x="1563" y="730.700" width="31" height="19.600" fill="#33b322"/><rect x="1563" y="750" width="31" height="19.300" fill="#3cc62a"/><rect x="1563" y="769" width="31" height="20.300" fill="#4ade2e"/><rect x="1563" y="789" width="31" height="19.600" fill="#55ee33"/><rect x="1563" y="808.300" width="31" height="19.600" fill="#28b0dd"/><rect x="1563" y="827.700" width="31" height="19.300" fill="#22a0d8"/><rect x="1563" y="846.700" width="31" height="19.600" fill="#2090c8"/><rect x="1563" y="866" width="31" height="20" fill="#2288c0"/><rect x="1563" y="885.700" width="31" height="38.300" fill="#2a80b8"/><rect x="1563" y="923.700" width="31" height="40" fill="#3578b0"/><rect x="1563" y="963.300" width="31" height="57.700" fill="#3870a8"/><rect x="1563" y="1020.700" width="31" height="57.600" fill="#3a6098"/><rect x="1563" y="1078" width="31" height="58.300" fill="#3a5088"/><rect x="1563" y="1136" width="31" height="59.300" fill="#3a4a80"/><rect x="1563" y="1195" width="31" height="82" fill="#3d3f70"/>
</g>
<path d="M16 1277V55H1594V1277M1562.500 55V1277" fill="none" stroke="#000" stroke-width="2.500"/>
<path d="M1594 74h10M1594 138.500h10M1594 203h10M1594 268h10M1594 332h10M1594 396h10M1594 460h10M1594 524h10M1594 589.500h10M1594 654h10M1594 718h10M1594 782h10M1594 846.500h10M1594 911h10M1594 975.500h10M1594 1040h10M1594 1104h10M1594 1168h10M1594 1232.500h10" stroke="#000" stroke-width="2.200" fill="none"/>
<g class="t">
<text x="1613" y="85">75</text><text x="1613" y="149.500">70</text><text x="1613" y="214">65</text><text x="1613" y="279">60</text><text x="1613" y="343">55</text><text x="1613" y="407">50</text><text x="1613" y="471">45</text><text x="1613" y="535">40</text><text x="1613" y="600.500">35</text><text x="1613" y="665">30</text><text x="1613" y="729">25</text><text x="1613" y="793">20</text><text x="1613" y="857.500">15</text><text x="1613" y="922">10</text><text x="1613" y="986.500">5</text><text x="1613" y="1051">0</text><text x="1613" y="1115">−5</text><text x="1613" y="1179">−10</text><text x="1613" y="1243.500">−15</text>
</g>
<text x="788.500" y="39" text-anchor="middle" font-family="'DejaVu Sans Mono','Liberation Mono',monospace" font-size="30.600" fill="#000">Mosaico ZH MAX [dBZ] 12.02.2025 13:05HOA (16:05UTC)</text>

<!-- logos -->
<g transform="translate(0 960) scale(.3571 .3333)">
<path fill="#ffb400" d="M430 1100C400 1040 350 1012 305 1012 225 1012 178 1090 178 1170 178 1260 230 1325 310 1325 360 1325 400 1295 420 1240L360 1240C345 1260 320 1268 300 1265 255 1255 232 1215 232 1170 232 1120 260 1075 310 1075 335 1075 350 1090 365 1105Z"/>
<path fill="#0096d8" d="M288 1118C330 1105 380 1125 472 1105L472 1165C420 1175 350 1150 288 1165ZM288 1180C340 1170 400 1190 472 1172L472 1225C410 1240 350 1215 288 1232Z"/>
</g>
<g font-family="'Liberation Sans',sans-serif" fill="#1a1a1a">
<text x="180" y="1322" font-size="31" textLength="112" lengthAdjust="spacingAndGlyphs">Servicio</text>
<text x="181" y="1350.500" font-size="31" textLength="197" lengthAdjust="spacingAndGlyphs">Meteorológico</text>
<text x="181" y="1379" font-size="31" textLength="118" lengthAdjust="spacingAndGlyphs">Nacional</text>
<text x="183" y="1401" font-size="20" textLength="92" lengthAdjust="spacingAndGlyphs">Argentina</text>
</g>
<g style="color:#5a6680" transform="translate(475 1360)"><use href="#arms"/></g>
<g font-family="'Liberation Serif',serif" font-weight="bold" fill="#3c4a70">
<text x="525.500" y="1341.500" font-size="27" textLength="128" lengthAdjust="spacingAndGlyphs">Ministerio</text>
<text x="525.500" y="1370" font-size="27" textLength="128" lengthAdjust="spacingAndGlyphs">de Defensa</text>
</g>
<text x="525.500" y="1392" font-family="'Liberation Serif',serif" font-size="16" fill="#6e7688" textLength="147" lengthAdjust="spacingAndGlyphs">República Argentina</text>
<g style="color:#1f2a5c" transform="translate(769.600 1360)"><use href="#arms"/></g>
<g font-family="'Liberation Serif',serif" font-weight="bold" fill="#1f2a5c">
<text x="820" y="1341.500" font-size="27" textLength="128.600" lengthAdjust="spacingAndGlyphs">Ministerio</text>
<text x="820" y="1370" font-size="27" textLength="155" lengthAdjust="spacingAndGlyphs">de Economía</text>
</g>
<text x="820" y="1392" font-family="'Liberation Serif',serif" font-size="16" fill="#3a4468" textLength="145.400" lengthAdjust="spacingAndGlyphs">República Argentina</text>
<rect x="1048" y="1299" width="92.500" height="106" fill="#b0b4b6"/>
<rect x="1053" y="1303" width="84" height="82" fill="#f5f5f5"/>
<text x="1057.500" y="1357" font-family="'Liberation Sans',sans-serif" font-weight="bold" font-size="66" fill="#e0200f" stroke="#e0200f" stroke-width="1.500" textLength="73" lengthAdjust="spacingAndGlyphs">INTA</text>
<rect x="1057" y="1360" width="75" height="7.500" fill="#0070c8"/>
<rect x="1057" y="1374" width="75" height="7.500" fill="#0070c8"/>
</svg>
</body></html>
